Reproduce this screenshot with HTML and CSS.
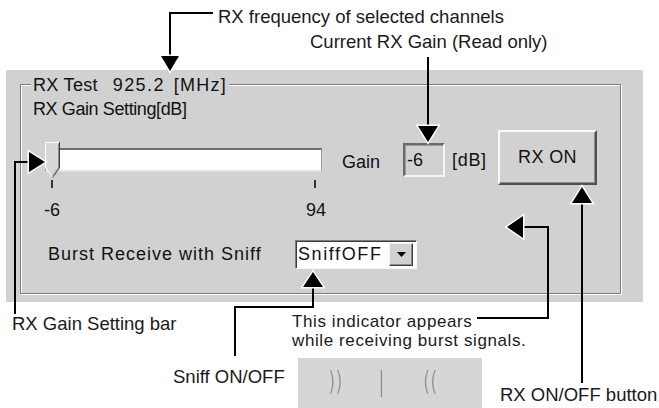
FILE: index.html
```html
<!DOCTYPE html>
<html lang="en">
<head>
    <meta charset="UTF-8">
    <meta name="viewport" content="width=device-width, initial-scale=1.0">
    <title>RX Test</title>
    <link rel="stylesheet" href="styles.css">
</head>
<body>

<div class="page">

    <div class="panel">
        <div class="group">
            <div class="legend">
                <span class="legend-name">RX Test</span>
                <span class="legend-freq">925.2</span>
                <span class="legend-unit">[MHz]</span>
            </div>

            <div class="group-body">
                <div class="caption">RX Gain Setting[dB]</div>

                <div class="gain-row">
                    <div class="slider">
                        <div class="track">
                            <svg class="thumb" width="15" height="36" viewBox="0 0 15 36">
                                <polygon points="0.5,0.5 14.5,0.5 14.5,26 7.5,35.5 0.5,26" fill="#d8d8d8"/>
                                <polyline points="7.5,35 0.5,26 0.5,0.5 14,0.5" fill="none" stroke="#fff"/>
                                <polyline points="14.5,0 14.5,26 7.5,35.5" fill="none" stroke="#404040"/>
                                <polyline points="13.5,1.5 13.5,25.7 7.5,33.5" fill="none" stroke="#8a8a8a"/>
                            </svg>
                        </div>
                        <div class="ticks"><span></span><span></span></div>
                        <div class="scale"><span>-6</span><span>94</span></div>
                    </div>

                    <span class="gain-label">Gain</span>
                    <span class="readout">-6</span>
                    <span class="unit">[dB]</span>
                    <button class="rx-button" type="button">RX ON</button>
                </div>

                <div class="burst-row">
                    <span class="burst-label">Burst Receive with Sniff</span>
                    <div class="combo">
                        <span class="combo-value">SniffOFF</span>
                        <span class="combo-arrow">
                            <svg width="9" height="5" viewBox="0 0 9 5"><polygon points="0,0 9,0 4.5,5" fill="#000"/></svg>
                        </span>
                    </div>
                </div>
            </div>
        </div>
    </div>

    <!-- callout texts -->
    <div class="note note-freq">RX frequency of selected channels</div>
    <div class="note note-gain">Current RX Gain (Read only)</div>
    <div class="note note-bar">RX Gain Setting bar</div>
    <div class="note note-indicator">This indicator appears<br>while receiving burst signals.</div>
    <div class="note note-sniff">Sniff ON/OFF</div>
    <div class="note note-button">RX ON/OFF button</div>

    <div class="indicator">
        <span class="wave">))</span>
        <span class="wave wave-bar">|</span>
        <span class="wave">((</span>
    </div>

    <svg class="callouts" width="659" height="408" viewBox="0 0 659 408">
        <g fill="none" stroke="#000" stroke-width="2">
            <path d="M213 13 H170 V57"/>
            <path d="M428 57 V126"/>
            <path d="M15 314 V162 H30"/>
            <path d="M235 356 V307 H313 V287"/>
            <path d="M477 318 H548 V227 H522"/>
            <path d="M582 383 V203"/>
        </g>
        <g fill="#000" stroke="#fff" stroke-width="3" paint-order="stroke">
            <polygon points="161,56 179,56 170,71"/>
            <polygon points="418,126 438,126 428,142"/>
            <polygon points="29,152 29,172 45,162"/>
            <polygon points="303,287 323,287 313,272"/>
            <polygon points="523,216 523,238 507,227"/>
            <polygon points="572,203 592,203 582,187"/>
        </g>
    </svg>

</div>

</body>
</html>
```

FILE: styles.css
```css
* {
    box-sizing: border-box;
}

body {
    margin: 0;
    background: #fff;
    color: #1c1c1c;
    font-family: "Liberation Sans", Arial, sans-serif;
}

.page {
    position: relative;
    width: 659px;
    height: 408px;
    overflow: hidden;
    background: #fff;
}

/* Dialog panel */
.panel {
    width: 637px;
    height: 232px;
    margin: 70px 0 0 6px;
    padding: 14px 0 0 14px;
    background: #d1d1d1;
    font-size: 18px;
    color: #111;
}

.group {
    width: 601px;
    height: 210px;
    border: 1px solid #7c7c7c;
    box-shadow: inset 1px 1px 0 #fff, 1px 1px 0 #fff;
}

.legend {
    display: flex;
    width: fit-content;
    margin: -10px 0 0 10px;
    padding: 0 2px;
    line-height: 20px;
    background: #d1d1d1;
}

.legend-name {
    letter-spacing: 0.3px;
}

.legend-freq {
    margin-left: 15px;
    letter-spacing: 1.4px;
}

.legend-unit {
    margin-left: 9px;
    letter-spacing: 1.2px;
}

.group-body {
    padding-left: 12px;
}

.caption {
    margin-top: 4px;
    line-height: 20px;
    letter-spacing: -0.4px;
}

/* Gain row */
.gain-row {
    display: flex;
    align-items: flex-start;
    margin: 11px 0 0 12px;
}

.slider {
    width: 285px;
    margin-top: 12px;
}

.track {
    position: relative;
    width: 277px;
    height: 24px;
    margin-top: 6px;
    background: #fff;
    border-top: 2px solid #6e6e6e;
    border-left: 1px solid #8a8a8a;
    border-bottom: 2px solid #e2e2e2;
    border-right: 1px solid #9a9a9a;
}

.thumb {
    position: absolute;
    left: -1px;
    top: -8px;
}

.ticks, .scale {
    display: flex;
    justify-content: space-between;
    padding: 0 14px 0 7px;
}

.ticks {
    height: 8px;
    margin-top: 8px;
}

.ticks span {
    width: 2px;
    height: 8px;
    margin-left: -1px;
    background: #333;
}

.scale {
    height: 20px;
    margin-top: 12px;
    line-height: 20px;
}

.scale span {
    display: flex;
    justify-content: center;
    width: 0;
}

.gain-label {
    width: 61px;
    margin: 22px 0 0 12px;
    line-height: 20px;
}

.readout {
    width: 42px;
    height: 34px;
    margin-top: 13px;
    padding-left: 2px;
    line-height: 30px;
    border: 2px solid;
    border-color: #6c6c6c #f6f6f6 #f6f6f6 #6c6c6c;
    box-shadow: inset 1px 1px 0 #9a9a9a;
}

.unit {
    width: 46px;
    margin: 20px 0 0 7px;
    line-height: 20px;
    letter-spacing: 0.7px;
}

.rx-button {
    width: 99px;
    height: 55px;
    padding: 0;
    font: inherit;
    letter-spacing: 0.4px;
    color: inherit;
    background: #d1d1d1;
    border: 2px solid;
    border-color: #f8f8f8 #505050 #505050 #f8f8f8;
    box-shadow: inset -1px -1px 0 #8c8c8c;
}

/* Burst row */
.burst-row {
    display: flex;
    align-items: center;
    margin: 20px 0 0 15px;
}

.burst-label {
    width: 247px;
    letter-spacing: 1px;
}

.combo {
    display: flex;
    align-items: center;
    width: 122px;
    height: 29px;
    background: #fff;
    border: 1px solid;
    border-color: #7c7c7c #f8f8f8 #f8f8f8 #7c7c7c;
    box-shadow: inset 1px 1px 0 #3c3c3c;
}

.combo-value {
    flex: 1;
    padding-left: 2px;
    letter-spacing: 1.6px;
}

.combo-arrow {
    display: flex;
    align-items: center;
    justify-content: center;
    width: 24px;
    height: 23px;
    margin-right: 3px;
    background: #d1d1d1;
    border: 1px solid;
    border-color: #f4f4f4 #404040 #404040 #f4f4f4;
    box-shadow: inset -1px -1px 0 #8a8a8a;
}

/* Callouts */
.note {
    position: absolute;
    font-size: 18.5px;
    line-height: 20px;
    color: #1a1a1a;
    white-space: nowrap;
}

.note-freq { left: 218px; top: 7px; }
.note-gain { left: 310px; top: 32px; }
.note-bar { left: 12px; top: 314px; }
.note-sniff { left: 173px; top: 367px; }
.note-button { left: 500px; top: 385px; }

.note-indicator {
    left: 292px;
    top: 312px;
    font-size: 17px;
    line-height: 19px;
    letter-spacing: 0.6px;
}

.indicator {
    position: absolute;
    left: 298px;
    top: 358px;
    width: 184px;
    height: 50px;
    display: flex;
    align-items: center;
    padding: 0 0 4px 27px;
    background: #d6d6d6;
    color: #707070;
    font-size: 26px;
    font-family: "DejaVu Sans", sans-serif;
    font-weight: 200;
}

.wave {
    transform: scaleX(0.7);
}

.wave-bar {
    margin: 0 34px 0 32px;
}

.callouts {
    position: absolute;
    left: 0;
    top: 0;
    pointer-events: none;
}
```
